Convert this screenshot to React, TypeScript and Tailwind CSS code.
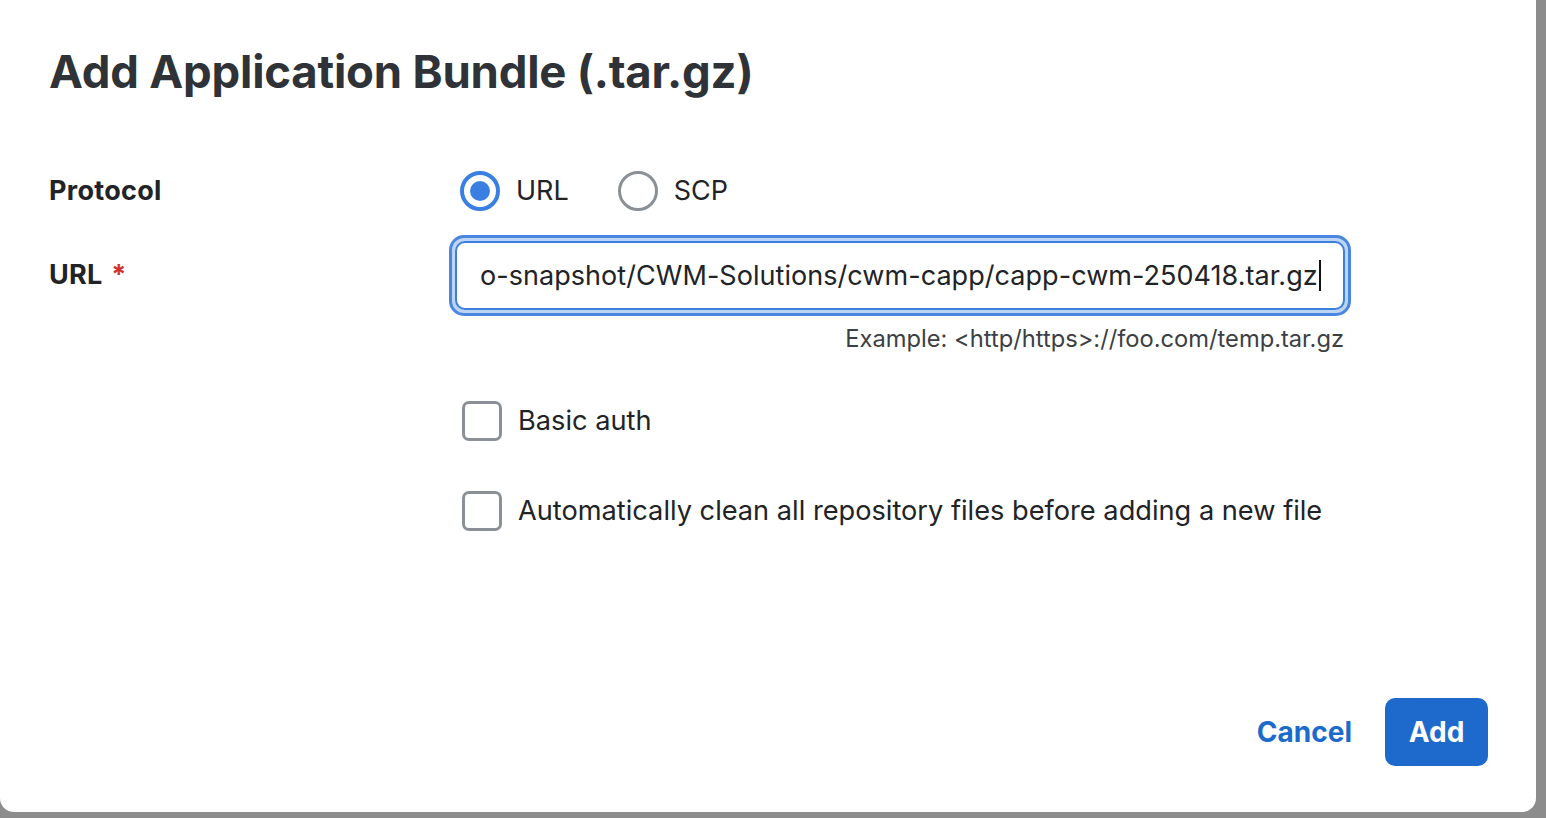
import { useState } from 'react';

export default function App() {
  const [protocol, setProtocol] = useState('URL');
  const [basicAuth, setBasicAuth] = useState(false);
  const [autoClean, setAutoClean] = useState(false);

  return (
    <div className="h-screen w-full overflow-hidden bg-[#8c8c8c]" style={{ fontFamily: 'Inter, "Noto Sans", sans-serif' }}>
      <div className="flex h-[812px] w-[1536px] flex-col rounded-b-[14px] bg-white pl-[49px] pr-[48px] text-[#212326]">
        <h1 className="mt-[40px] text-[45.5px] font-bold leading-[64px] tracking-[-0.2px] text-[#2f3237]">
          Add Application Bundle (.tar.gz)
        </h1>

        {/* Protocol */}
        <div className="mt-[67px] flex items-center">
          <div className="w-[400px] text-[27px] font-bold leading-[40px] tracking-[0.3px]">Protocol</div>
          <div className="flex items-center gap-[49px] pl-[11px]">
            {['URL', 'SCP'].map((p) => (
              <label key={p} className="flex cursor-pointer items-center gap-[16px]" onClick={() => setProtocol(p)}>
                <span
                  className={
                    protocol === p
                      ? 'flex h-[40px] w-[40px] items-center justify-center rounded-full border-[4px] border-[#3a80e2]'
                      : 'flex h-[40px] w-[40px] items-center justify-center rounded-full border-[3px] border-[#8b9097]'
                  }
                >
                  {protocol === p && <span className="h-[20px] w-[20px] rounded-full bg-[#3a80e2]" />}
                </span>
                <span className="text-[27px] leading-[40px]">{p}</span>
              </label>
            ))}
          </div>
        </div>

        {/* URL */}
        <div className="mt-[24px] flex items-start">
          <div className="w-[400px] pt-[22px] text-[27px] font-bold leading-[36px] tracking-[0.3px]">
            URL <span className="ml-[2px] text-[#d0312d]">*</span>
          </div>
          <div className="flex w-[902px] flex-col items-end">
            <div className="w-full rounded-[15px] border-[3px] border-[#4a86df] bg-[#bcd5f6] p-[3px]">
              <div className="flex h-[69px] items-center overflow-hidden rounded-[10px] border-[2px] border-[#3d7fdc] bg-white pl-[23px]">
                <span className="whitespace-nowrap text-[27px] leading-[36px] tracking-[0.05px]">
                  o-snapshot/CWM-Solutions/cwm-capp/capp-cwm-250418.tar.gz
                </span>
                <span className="ml-[1px] h-[31px] w-[2px] bg-[#111]" />
              </div>
            </div>
            <div className="mr-[7px] mt-[7px] text-[23.7px] leading-[32px] text-[#3c3f43]">
              Example: &lt;http/https&gt;://foo.com/temp.tar.gz
            </div>
          </div>
        </div>

        {/* Options */}
        <div className="ml-[413px] mt-[46px] flex flex-col gap-[50px]">
          {[
            { label: 'Basic auth', value: basicAuth, set: setBasicAuth },
            { label: 'Automatically clean all repository files before adding a new file', value: autoClean, set: setAutoClean },
          ].map((o) => (
            <label key={o.label} className="flex cursor-pointer items-center gap-[16px]" onClick={() => o.set(!o.value)}>
              <span className="h-[40px] w-[40px] rounded-[7px] border-[3px] border-[#8b9097] bg-white" />
              <span className="text-[27.2px] leading-[40px]">{o.label}</span>
            </label>
          ))}
        </div>

        {/* Footer */}
        <div className="mt-auto mb-[46px] flex items-center justify-end gap-[33px]">
          <button className="text-[28px] font-bold text-[#1d6acd]">Cancel</button>
          <button className="h-[68px] w-[103px] rounded-[10px] bg-[#1e6acc] text-[28px] font-bold text-white">Add</button>
        </div>
      </div>
    </div>
  );
}
